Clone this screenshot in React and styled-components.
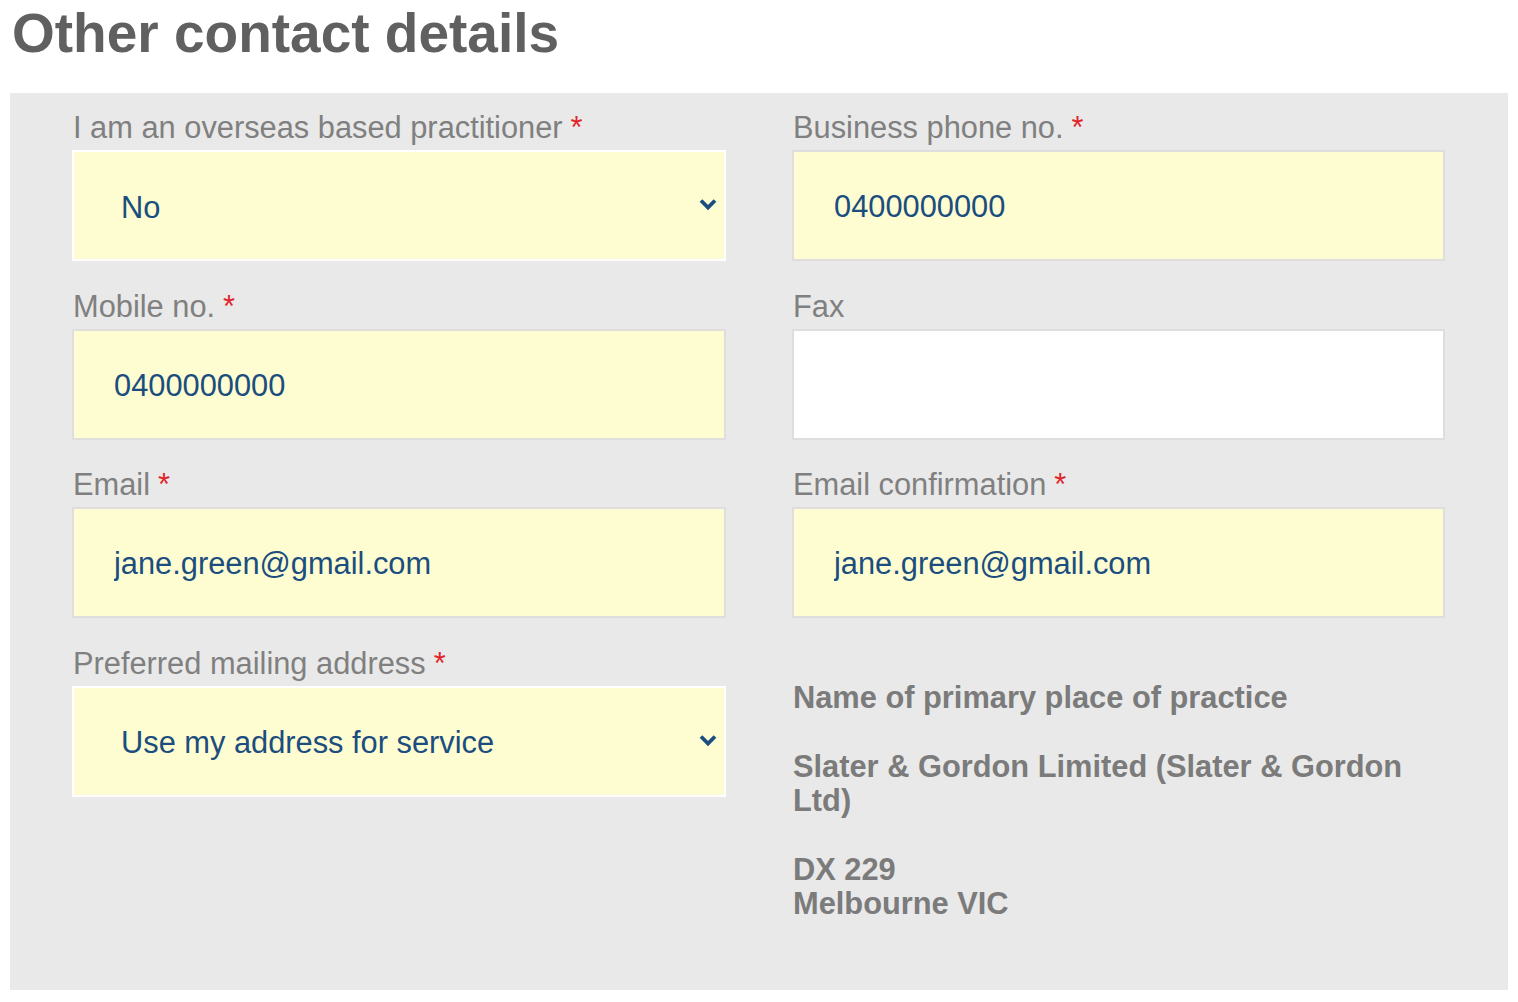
import React from 'react';
import styled, { createGlobalStyle } from 'styled-components';

const GlobalStyle = createGlobalStyle`
  html, body {
    margin: 0;
    padding: 0;
    background: #ffffff;
    font-family: 'Liberation Sans', Arial, sans-serif;
  }
`;

const Page = styled.div`
  padding: 0 10px 0 10px;
`;

const Heading = styled.h2`
  margin: 0;
  padding: 0 0 0 2px;
  height: 93px;
  font-size: 55px;
  line-height: 66px;
  font-weight: 700;
  color: #606060;
`;

const Panel = styled.div`
  background: #e9e9e9;
  height: 897px;
  box-sizing: border-box;
  padding: 18px 63px 0 62px;
  display: grid;
  grid-template-columns: 654px 653px;
  column-gap: 66px;
  align-content: start;
`;

const Column = styled.div`
  display: flex;
  flex-direction: column;
`;

const Field = styled.div`
  display: flex;
  flex-direction: column;
  margin-bottom: 28.5px;
`;

const Label = styled.label`
  font-size: 30.8px;
  line-height: 34px;
  color: #808080;
  margin-bottom: 5px;
  padding-left: 1px;
`;

const Required = styled.span`
  color: #e0262b;
  margin-left: 8px;
`;

const TextInput = styled.input`
  box-sizing: border-box;
  height: 111px;
  width: 100%;
  margin: 0;
  border: 2px solid #dedede;
  background: ${(p) => (p.$empty ? '#ffffff' : '#fefdd2')};
  padding: 3px 0 0 40px;
  font-family: 'Liberation Sans', Arial, sans-serif;
  font-size: 30.8px;
  color: #1b4d7e;
  outline: none;
`;

const SelectWrap = styled.div`
  position: relative;
  height: 111px;
`;

const Select = styled.select`
  appearance: none;
  -webkit-appearance: none;
  box-sizing: border-box;
  width: 100%;
  height: 111px;
  margin: 0;
  border: 2px solid #ffffff;
  border-radius: 0;
  background: #fefdd2;
  padding: 3px 0 0 47px;
  font-family: 'Liberation Sans', Arial, sans-serif;
  font-size: 30.8px;
  color: #1b4d7e;
  outline: none;
`;

const Chevron = styled.svg`
  position: absolute;
  right: 9px;
  top: 48px;
  width: 18px;
  height: 13px;
  pointer-events: none;
`;

const InfoBlock = styled.div`
  margin-top: 34px;
  font-size: 30.8px;
  line-height: 34px;
  font-weight: 700;
  color: #7b7b7b;
  padding-left: 1px;
`;

const InfoPara = styled.p`
  margin: 0 0 35px 0;
`;

const SelectField = ({ label, value, options }) => (
  <Field>
    <Label>
      {label}
      <Required>*</Required>
    </Label>
    <SelectWrap>
      <Select value={value} onChange={() => {}}>
        {options.map((o) => (
          <option key={o}>{o}</option>
        ))}
      </Select>
      <Chevron viewBox="0 0 18 13">
        <path d="M2 2.5 L9 9.5 L16 2.5" fill="none" stroke="#1b4d7e" strokeWidth="3.8" />
      </Chevron>
    </SelectWrap>
  </Field>
);

const InputField = ({ label, value, required }) => (
  <Field>
    <Label>
      {label}
      {required && <Required>*</Required>}
    </Label>
    <TextInput value={value} readOnly $empty={!value} />
  </Field>
);

export default function App() {
  return (
    <Page>
      <GlobalStyle />
      <Heading>Other contact details</Heading>
      <Panel>
        <Column>
          <SelectField label="I am an overseas based practitioner" value="No" options={['No', 'Yes']} />
          <InputField label="Mobile no." value="0400000000" required />
          <InputField label="Email" value="jane.green@gmail.com" required />
          <SelectField
            label="Preferred mailing address"
            value="Use my address for service"
            options={['Use my address for service', 'Use my place of practice']}
          />
        </Column>
        <Column>
          <InputField label="Business phone no." value="0400000000" required />
          <InputField label="Fax" value="" />
          <InputField label="Email confirmation" value="jane.green@gmail.com" required />
          <InfoBlock>
            <InfoPara>Name of primary place of practice</InfoPara>
            <InfoPara>Slater &amp; Gordon Limited (Slater &amp; Gordon Ltd)</InfoPara>
            <InfoPara>
              DX 229
              <br />
              Melbourne VIC
            </InfoPara>
          </InfoBlock>
        </Column>
      </Panel>
    </Page>
  );
}
